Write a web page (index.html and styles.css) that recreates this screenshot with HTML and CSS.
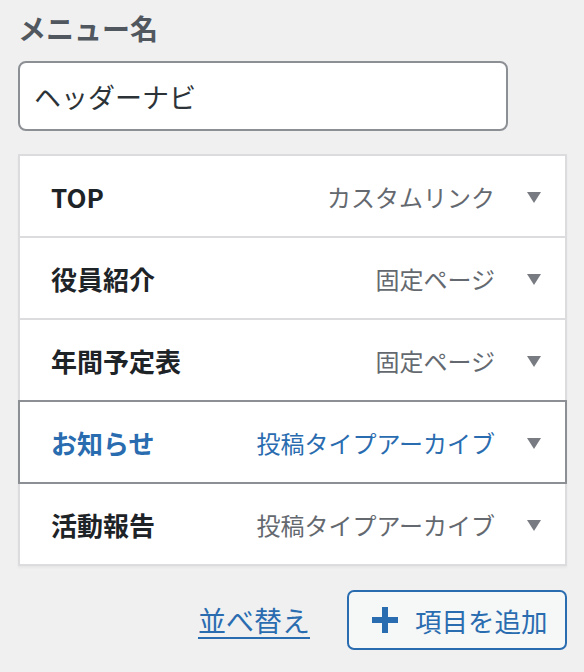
FILE: index.html
```html
<!DOCTYPE html>
<html lang="ja">
<head>
<meta charset="utf-8">
<link rel="stylesheet" href="styles.css">
</head>
<body>
<div class="panel">
  <label class="field-label" for="menu-name">メニュー名</label>
  <div class="name-input" id="menu-name">ヘッダーナビ</div>

  <ul class="menu-list">
    <li class="menu-item">
      <span class="item-title">TOP</span>
      <span class="item-type">カスタムリンク</span>
      <span class="arrow"></span>
    </li>
    <li class="menu-item">
      <span class="item-title">役員紹介</span>
      <span class="item-type">固定ページ</span>
      <span class="arrow"></span>
    </li>
    <li class="menu-item">
      <span class="item-title">年間予定表</span>
      <span class="item-type">固定ページ</span>
      <span class="arrow"></span>
    </li>
    <li class="menu-item is-active">
      <span class="item-title">お知らせ</span>
      <span class="item-type">投稿タイプアーカイブ</span>
      <span class="arrow"></span>
    </li>
    <li class="menu-item">
      <span class="item-title">活動報告</span>
      <span class="item-type">投稿タイプアーカイブ</span>
      <span class="arrow"></span>
    </li>
  </ul>

  <div class="actions">
    <a class="reorder" href="#">並べ替え</a>
    <button class="add-btn" type="button">
      <svg class="plus" width="26" height="26" viewBox="0 0 26 26" aria-hidden="true">
        <rect x="10" y="0" width="6" height="26" fill="currentColor"/>
        <rect x="0" y="10" width="26" height="6" fill="currentColor"/>
      </svg>
      <span>項目を追加</span>
    </button>
  </div>
</div>
</body>
</html>
```

FILE: styles.css
```css
* { box-sizing: border-box; }

html, body {
  margin: 0;
  padding: 0;
  background: #f0f0f1;
}

body {
  font-family: "Noto Sans CJK JP", "Noto Sans", sans-serif;
  color: #1d2327;
}

.panel {
  padding: 12px 17px 0 18px;
  display: flex;
  flex-direction: column;
}

.field-label {
  display: block;
  font-size: 28px;
  font-weight: 700;
  color: #50575e;
  line-height: 32px;
  margin: 0 0 17px 0;
}

.name-input {
  width: 490px;
  height: 70px;
  border: 2px solid #8c8f94;
  border-radius: 8px;
  background: #fff;
  font-size: 27px;
  color: #2c3338;
  display: flex;
  align-items: center;
  padding: 0 0 0 14px;
  line-height: 1;
}

.menu-list {
  list-style: none;
  margin: 23px 0 0 0;
  padding: 0;
  box-shadow: 0 2px 2px rgba(0, 0, 0, 0.04);
}

.menu-item {
  position: relative;
  display: flex;
  align-items: center;
  height: 84px;
  margin-top: -2px;
  border: 2px solid #dcdcde;
  background: #fff;
  padding: 0 24px 0 31px;
}

.menu-item:first-child { margin-top: 0; }

.menu-item.is-active {
  border-color: #8c8f94;
  z-index: 1;
}

.item-title {
  font-size: 26px;
  font-weight: 700;
  color: #1d2327;
  flex: 1;
}

.item-type {
  font-size: 24px;
  color: #646970;
  margin-right: 32px;
}

.is-active .item-title,
.is-active .item-type {
  color: #2a6cb0;
}

.arrow {
  width: 0;
  height: 0;
  border-left: 7px solid transparent;
  border-right: 7px solid transparent;
  border-top: 11px solid #787c82;
  margin-top: 2px;
}

.actions {
  display: flex;
  justify-content: flex-end;
  align-items: center;
  gap: 37px;
  margin-top: 24px;
}

.reorder {
  font-size: 28px;
  color: #2a6cb0;
  text-decoration: underline;
  text-underline-offset: 5px;
  text-decoration-thickness: 2px;
}

.add-btn {
  display: flex;
  align-items: center;
  gap: 17px;
  height: 60px;
  width: 220px;
  padding: 0 0 0 23px;
  border: 2px solid #2a6cb0;
  border-radius: 7px;
  background: #f6f7f7;
  color: #2a6cb0;
  font-family: "Noto Sans CJK JP", "Noto Sans", sans-serif;
  font-size: 26.5px;
  cursor: pointer;
}

.plus { flex: none; }
```
